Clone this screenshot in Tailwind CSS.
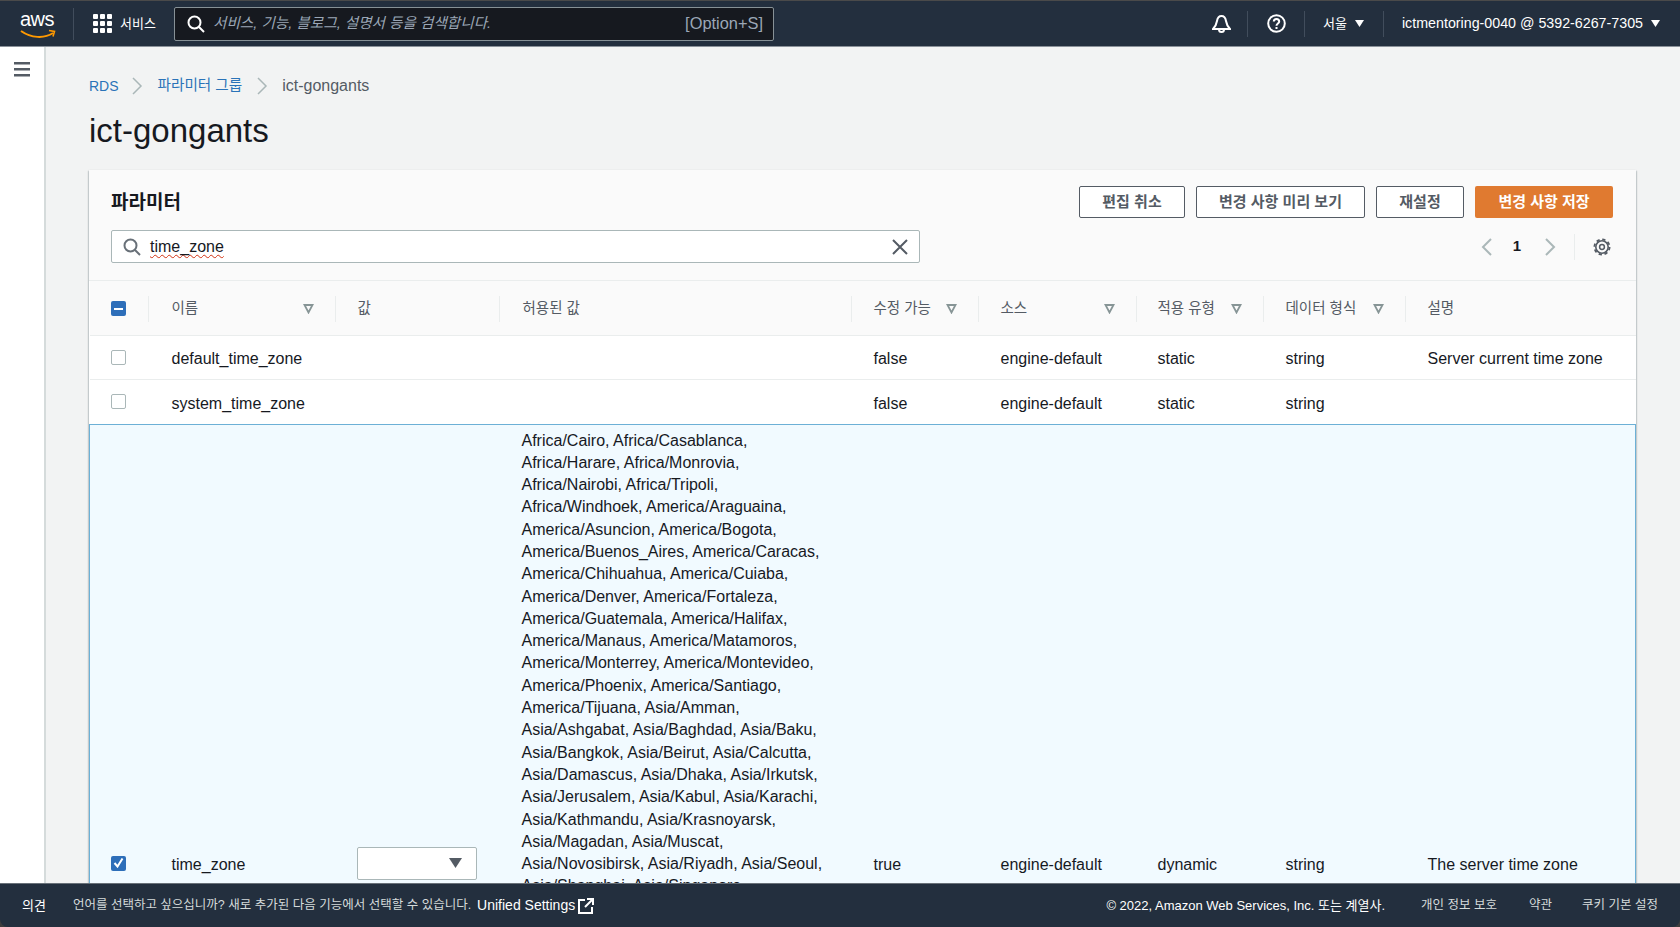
<!DOCTYPE html>
<html lang="ko">
<head>
    <meta charset="utf-8">
    <title>ict-gongants</title>
    <script src="https://cdn.jsdelivr.net/npm/@tailwindcss/browser@4"></script>
</head>
<body class="h-screen overflow-hidden flex flex-col bg-[#3d3d3d] text-[#16191f] text-[16px] font-['Liberation_Sans','Noto_Sans_CJK_KR',sans-serif]">
    <!-- top nav -->
    <header class="h-[47px] shrink-0 bg-[#232f3e] border-t border-t-[#4a4a4a] border-b border-b-[#8a9199] flex items-center text-white text-[14px]">
        <div class="w-[74px] h-[32px] pl-[20px] border-r border-[#414d5c] shrink-0">
            <div class="relative w-[35px] h-[32px]">
                <span class="absolute left-0 top-[-3px] text-[20px] leading-[28px] tracking-[-0.5px]">aws</span>
                <svg class="absolute left-0 top-[21px]" width="36" height="12" viewBox="0 0 36 12" fill="none"><path d="M1 2c10 7 23 8 32 2" stroke="#f90" stroke-width="2"/><path d="M29 1.500l5.500 1-1.500 5" stroke="#f90" stroke-width="1.600"/></svg>
            </div>
        </div>
        <svg class="ml-[19px]" width="19" height="19" viewBox="0 0 19 19" fill="#fff"><rect x="0" y="0" width="5" height="5" rx="1"/><rect x="7" y="0" width="5" height="5" rx="1"/><rect x="14" y="0" width="5" height="5" rx="1"/><rect x="0" y="7" width="5" height="5" rx="1"/><rect x="7" y="7" width="5" height="5" rx="1"/><rect x="14" y="7" width="5" height="5" rx="1"/><rect x="0" y="14" width="5" height="5" rx="1"/><rect x="7" y="14" width="5" height="5" rx="1"/><rect x="14" y="14" width="5" height="5" rx="1"/></svg>
        <span class="ml-[8px] w-[54px] text-[13px]">서비스</span>
        <div class="w-[600px] h-[34px] rounded-[2px] bg-[#16191f] border border-[#879196] flex items-center pl-[12px] pr-[10px]">
            <svg width="18" height="18" viewBox="0 0 18 18" fill="none" stroke="#fff" stroke-width="2"><circle cx="7.500" cy="7.500" r="6"/><path d="M12 12l5 5"/></svg>
            <span class="ml-[8px] italic text-[#9ba7b6] text-[14.6px]">서비스, 기능, 블로그, 설명서 등을 검색합니다.</span>
            <span class="ml-auto text-[#9ba7b6] text-[16.4px]">[Option+S]</span>
        </div>
        <svg class="ml-auto" width="19" height="20" viewBox="0 0 19 20" fill="none" stroke="#fff" stroke-width="2"><path d="M1 15h17c-2-2-3.500-5-4-8-.5-3-2.500-5-4.500-5S5.500 4 5 7c-.5 3-2 6-4 8z"/><path d="M7 15.500a2.500 2.500 0 0 0 5 0"/></svg>
        <span class="ml-[16px] w-px h-[26px] bg-[#414d5c]"></span>
        <svg class="ml-[19px]" width="19" height="19" viewBox="0 0 19 19" fill="none" stroke="#fff" stroke-width="2"><circle cx="9.500" cy="9.500" r="8.300"/><path d="M6.800 7.500c0-3.500 5.400-3.500 5.400 0 0 2-2.700 2-2.700 4.200"/><path d="M9.500 13v2"/></svg>
        <span class="ml-[18px] w-px h-[26px] bg-[#414d5c]"></span>
        <span class="ml-[18px] text-[13px]">서울</span>
        <svg class="ml-[8px]" width="9" height="7" viewBox="0 0 9 7" fill="#fff"><path d="M0 0h9L4.500 7z"/></svg>
        <span class="ml-[19px] w-px h-[26px] bg-[#414d5c]"></span>
        <span class="ml-[18px] whitespace-nowrap text-[14.25px]">ictmentoring-0040 @ 5392-6267-7305</span>
        <svg class="ml-[8px] mr-[20px]" width="9" height="7" viewBox="0 0 9 7" fill="#fff"><path d="M0 0h9L4.500 7z"/></svg>
    </header>

    <div class="flex-1 flex min-h-0 bg-[#f2f3f3]">
        <!-- collapsed side nav -->
        <aside class="w-[46px] shrink-0 bg-white border-r-2 border-[#d5dbdb] pl-[14px] pt-[15px]">
            <svg width="16" height="15" viewBox="0 0 16 15" fill="#545b64"><rect width="16" height="2.500"/><rect y="6" width="16" height="2.500"/><rect y="12" width="16" height="2.500"/></svg>
        </aside>

        <main class="flex-1 min-w-0 overflow-hidden pl-[43px] pr-[44px]">
            <nav class="flex items-center h-[20px] mt-[29px] text-[16px] text-[#545b64]">
                <a class="text-[#2a73b8] text-[14px]">RDS</a>
                <svg class="ml-[13px]" width="11" height="18" viewBox="0 0 11 18" fill="none" stroke="#aab7b8" stroke-width="1.500"><path d="M1 1l8 8-8 8"/></svg>
                <a class="ml-[15px] text-[#2a73b8] text-[14.6px]">파라미터 그룹</a>
                <svg class="ml-[15px]" width="11" height="18" viewBox="0 0 11 18" fill="none" stroke="#aab7b8" stroke-width="1.500"><path d="M1 1l8 8-8 8"/></svg>
                <span class="ml-[14px]">ict-gongants</span>
            </nav>
            <h1 class="mt-[13px] text-[33px] leading-[44px] font-normal">ict-gongants</h1>

            <section class="mt-[17px] bg-white shadow-[0_1px_2px_rgba(0,28,36,0.3),1px_1px_1px_rgba(0,28,36,0.1),-1px_1px_1px_rgba(0,28,36,0.1)]">
                <div class="h-[111px] bg-[#fafafa] border-b border-[#eaeded] pl-[22px] pr-[23px] pt-[16px]">
                    <div class="flex items-center h-[32px]">
                        <h2 class="mt-[2px] text-[19px] font-bold">파라미터</h2>
                        <div class="ml-auto flex gap-[11px] text-[15px] font-bold text-[#545b64]">
                            <button class="w-[106px] h-[32px] bg-white border border-[#545b64] rounded-[2px]">편집 취소</button>
                            <button class="w-[169px] h-[32px] bg-white border border-[#545b64] rounded-[2px]">변경 사항 미리 보기</button>
                            <button class="w-[88px] h-[32px] bg-white border border-[#545b64] rounded-[2px]">재설정</button>
                            <button class="w-[138px] h-[32px] bg-[#e07a30] text-white rounded-[2px]">변경 사항 저장</button>
                        </div>
                    </div>
                    <div class="flex items-center mt-[12px]">
                        <div class="relative w-[809px] h-[33px] bg-white border border-[#aab7b8] rounded-[2px] flex items-center pl-[11px] pr-[11px]">
                            <svg width="18" height="18" viewBox="0 0 18 18" fill="none" stroke="#687078" stroke-width="2"><circle cx="7.500" cy="7.500" r="6"/><path d="M12 12l5 5"/></svg>
                            <span class="ml-[9px] underline decoration-wavy decoration-[#d13212] decoration-1 underline-offset-2">time_zone</span>
                            <svg class="ml-auto" width="16" height="16" viewBox="0 0 16 16" fill="none" stroke="#545b64" stroke-width="2"><path d="M1 1l14 14M15 1L1 15"/></svg>
                        </div>
                        <svg class="ml-auto" width="11" height="18" viewBox="0 0 11 18" fill="none" stroke="#aab7b8" stroke-width="2"><path d="M10 1L2 9l8 8"/></svg>
                        <span class="ml-[21px] font-bold text-[15px]">1</span>
                        <svg class="ml-[24px]" width="11" height="18" viewBox="0 0 11 18" fill="none" stroke="#aab7b8" stroke-width="2"><path d="M1 1l8 8-8 8"/></svg>
                        <span class="ml-[18px] w-px h-[26px] bg-[#eaeded]"></span>
                        <svg class="ml-[18px] mr-[2px]" width="18" height="18" viewBox="0 0 18 18" fill="none" stroke="#545b64"><circle cx="9" cy="9" r="6.200" stroke-width="1.600"/><circle cx="9" cy="9" r="7.600" stroke-width="1.800" stroke-dasharray="3.300 2.670"/><circle cx="9" cy="9" r="2.400" stroke-width="1.500"/></svg>
                    </div>
                </div>

                <table class="w-full table-fixed text-[16px]">
                    <colgroup>
                        <col class="w-[58px]"><col class="w-[187px]"><col class="w-[164px]"><col class="w-[352px]"><col class="w-[127px]"><col class="w-[158px]"><col class="w-[127px]"><col class="w-[142px]"><col>
                    </colgroup>
                    <thead class="bg-[#fafafa] text-[#545b64] text-[14.5px]">
                        <tr class="h-[54px] border-b border-[#eaeded]">
                            <th class="pl-[21px] pt-[2px] font-normal text-left">
                                <span class="w-[15px] h-[15px] rounded-[2px] bg-[#2d6eb9] flex items-center justify-center"><span class="w-[9px] h-[2px] bg-white"></span></span>
                            </th>
                            <th class="pt-[2px] font-normal text-left"><div class="h-[26px] border-l border-[#eaeded] pl-[23px] pr-[21px] flex items-center justify-between">이름<svg width="11" height="10" viewBox="0 0 11 10" fill="none" stroke="#879596" stroke-width="1.800"><path d="M1.500 1h8L5.500 8.500z"/></svg></div></th>
                            <th class="pt-[2px] font-normal text-left"><div class="h-[26px] border-l border-[#eaeded] pl-[22px] flex items-center">값</div></th>
                            <th class="pt-[2px] font-normal text-left"><div class="h-[26px] border-l border-[#eaeded] pl-[23px] flex items-center">허용된 값</div></th>
                            <th class="pt-[2px] font-normal text-left"><div class="h-[26px] border-l border-[#eaeded] pl-[22px] pr-[21px] flex items-center justify-between">수정 가능<svg width="11" height="10" viewBox="0 0 11 10" fill="none" stroke="#879596" stroke-width="1.800"><path d="M1.500 1h8L5.500 8.500z"/></svg></div></th>
                            <th class="pt-[2px] font-normal text-left"><div class="h-[26px] border-l border-[#eaeded] pl-[22px] pr-[21px] flex items-center justify-between">소스<svg width="11" height="10" viewBox="0 0 11 10" fill="none" stroke="#879596" stroke-width="1.800"><path d="M1.500 1h8L5.500 8.500z"/></svg></div></th>
                            <th class="pt-[2px] font-normal text-left"><div class="h-[26px] border-l border-[#eaeded] pl-[21px] pr-[21px] flex items-center justify-between">적용 유형<svg width="11" height="10" viewBox="0 0 11 10" fill="none" stroke="#879596" stroke-width="1.800"><path d="M1.500 1h8L5.500 8.500z"/></svg></div></th>
                            <th class="pt-[2px] font-normal text-left"><div class="h-[26px] border-l border-[#eaeded] pl-[22px] pr-[21px] flex items-center justify-between">데이터 형식<svg width="11" height="10" viewBox="0 0 11 10" fill="none" stroke="#879596" stroke-width="1.800"><path d="M1.500 1h8L5.500 8.500z"/></svg></div></th>
                            <th class="pt-[2px] font-normal text-left"><div class="h-[26px] border-l border-[#eaeded] pl-[22px] flex items-center">설명</div></th>
                        </tr>
                    </thead>
                    <tbody>
                        <tr class="h-[44px] border-b border-[#eaeded]">
                            <td class="pl-[21px]"><span class="block w-[15px] h-[15px] rounded-[2px] bg-white border border-[#aab7b8]"></span></td>
                            <td class="pl-[24px] pt-[4px]">default_time_zone</td>
                            <td></td>
                            <td></td>
                            <td class="pl-[23px] pt-[4px]">false</td>
                            <td class="pl-[23px] pt-[4px]">engine-default</td>
                            <td class="pl-[22px] pt-[4px]">static</td>
                            <td class="pl-[23px] pt-[4px]">string</td>
                            <td class="pl-[23px] pt-[4px]">Server current time zone</td>
                        </tr>
                        <tr class="h-[45px]">
                            <td class="pl-[21px]"><span class="block w-[15px] h-[15px] rounded-[2px] bg-white border border-[#aab7b8]"></span></td>
                            <td class="pl-[24px] pt-[4px]">system_time_zone</td>
                            <td></td>
                            <td></td>
                            <td class="pl-[23px] pt-[4px]">false</td>
                            <td class="pl-[23px] pt-[4px]">engine-default</td>
                            <td class="pl-[22px] pt-[4px]">static</td>
                            <td class="pl-[23px] pt-[4px]">string</td>
                            <td></td>
                        </tr>
                        <tr class="bg-[#f1faff] border border-[#6cb0d6]">
                            <td class="pl-[21px] pb-[2px]">
                                <span class="w-[15px] h-[15px] rounded-[2px] bg-[#2d6eb9] flex items-center justify-center">
                                    <svg width="11" height="10" viewBox="0 0 11 10" fill="none" stroke="#fff" stroke-width="2"><path d="M1.500 5l3 3.500 5-8"/></svg>
                                </span>
                            </td>
                            <td class="pl-[24px] pt-[2px]">time_zone</td>
                            <td class="pl-[22px] pb-[2px]">
                                <div class="w-[120px] h-[33px] bg-white border border-[#aab7b8] rounded-[2px] flex items-center justify-end pr-[14px]">
                                    <svg width="13" height="10" viewBox="0 0 13 10" fill="#545b64"><path d="M0 0h13L6.500 10z"/></svg>
                                </div>
                            </td>
                            <td class="pl-[23px] py-[5px] leading-[22.3px] whitespace-nowrap">
                                Africa/Cairo, Africa/Casablanca,<br>
                                Africa/Harare, Africa/Monrovia,<br>
                                Africa/Nairobi, Africa/Tripoli,<br>
                                Africa/Windhoek, America/Araguaina,<br>
                                America/Asuncion, America/Bogota,<br>
                                America/Buenos_Aires, America/Caracas,<br>
                                America/Chihuahua, America/Cuiaba,<br>
                                America/Denver, America/Fortaleza,<br>
                                America/Guatemala, America/Halifax,<br>
                                America/Manaus, America/Matamoros,<br>
                                America/Monterrey, America/Montevideo,<br>
                                America/Phoenix, America/Santiago,<br>
                                America/Tijuana, Asia/Amman,<br>
                                Asia/Ashgabat, Asia/Baghdad, Asia/Baku,<br>
                                Asia/Bangkok, Asia/Beirut, Asia/Calcutta,<br>
                                Asia/Damascus, Asia/Dhaka, Asia/Irkutsk,<br>
                                Asia/Jerusalem, Asia/Kabul, Asia/Karachi,<br>
                                Asia/Kathmandu, Asia/Krasnoyarsk,<br>
                                Asia/Magadan, Asia/Muscat,<br>
                                Asia/Novosibirsk, Asia/Riyadh, Asia/Seoul,<br>
                                Asia/Shanghai, Asia/Singapore,<br>
                                Asia/Taipei, Asia/Tehran, Asia/Tokyo,<br>
                                Asia/Ulaanbaatar, Asia/Vladivostok,<br>
                                Asia/Yakutsk, Asia/Yerevan,<br>
                                Atlantic/Azores, Australia/Adelaide,<br>
                                Australia/Brisbane, Australia/Darwin,<br>
                                Australia/Hobart, Australia/Perth,<br>
                                Australia/Sydney, Brazil/East,<br>
                                Canada/Newfoundland, Canada/Saskatchewan,<br>
                                Canada/Yukon, Europe/Amsterdam,<br>
                                Europe/Athens, Europe/Dublin,<br>
                                Europe/Helsinki, Europe/Istanbul,<br>
                                Europe/Kaliningrad, Europe/Moscow,<br>
                                Europe/Paris, Europe/Prague,<br>
                                Europe/Sarajevo, Pacific/Auckland,<br>
                                Pacific/Fiji, Pacific/Guam,<br>
                                Pacific/Honolulu, Pacific/Samoa,<br>
                                US/Alaska, US/Central, US/Eastern,<br>
                                US/East-Indiana, US/Pacific, UTC
                            </td>
                            <td class="pl-[23px] pt-[2px]">true</td>
                            <td class="pl-[23px] pt-[2px]">engine-default</td>
                            <td class="pl-[22px] pt-[2px]">dynamic</td>
                            <td class="pl-[23px] pt-[2px]">string</td>
                            <td class="pl-[23px] pt-[2px]">The server time zone</td>
                        </tr>
                    </tbody>
                </table>
            </section>
        </main>
    </div>

    <!-- footer -->
    <footer class="h-[44px] shrink-0 bg-[#232f3e] border-t border-[#687078] flex items-center text-[12.5px] text-[#d5dbdb] rounded-b-[8px]">
        <span class="ml-[22px] text-white text-[13px]">의견</span>
        <span class="ml-[27px]">언어를 선택하고 싶으십니까? 새로 추가된 다음 기능에서 선택할 수 있습니다.</span>
        <span class="ml-[6px] text-white text-[14px]">Unified Settings</span>
        <svg class="ml-[3px]" width="16" height="16" viewBox="0 0 16 16" fill="none" stroke="#fff" stroke-width="2"><path d="M7 2H1v13h13V9M9 1h6v6M15 1L7 9"/></svg>
        <span class="ml-auto text-white text-[13px]">© 2022, Amazon Web Services, Inc. 또는 계열사.</span>
        <span class="ml-[36px]">개인 정보 보호</span>
        <span class="ml-[32px]">약관</span>
        <span class="ml-[30px] mr-[22px]">쿠키 기본 설정</span>
    </footer>
</body>
</html>
